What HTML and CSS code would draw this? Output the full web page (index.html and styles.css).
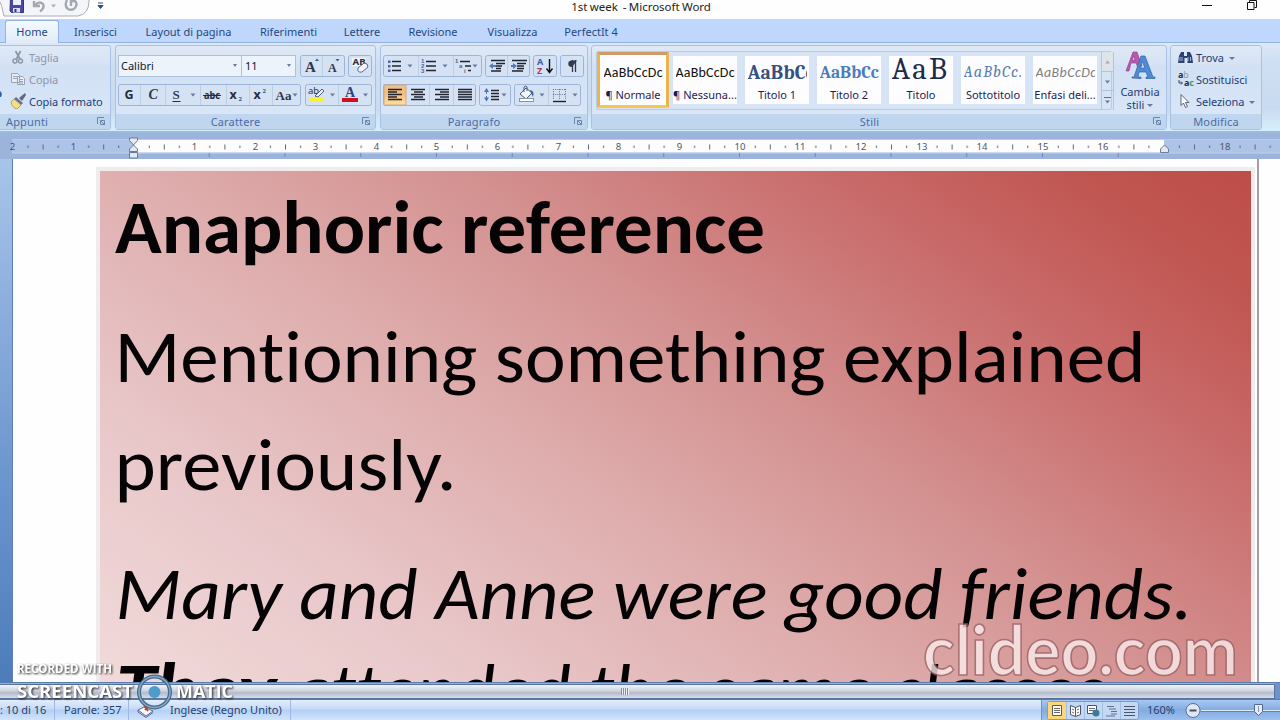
FILE: index.html
```
<!DOCTYPE html>
<html lang="it">
<head>
<meta charset="utf-8">
<title>1st week - Microsoft Word</title>
<link rel="stylesheet" href="styles.css">
</head>
<body>
<div class="window">
  <header class="titlebar">
    <svg class="quick" width="120" height="19" viewBox="0 0 120 19">
      <path d="M-4 -6 Q3 6 4 16 H78 Q89 14 89 1 V-4" fill="#f4f5f8" stroke="#a9acb4"/>
      <path d="M10.500 -2 h13 v14.500 h-12 l-1.500 -1.500z" fill="#4b49a6" stroke="#343380"/>
      <path d="M13 -1 h8 v6 h-8z" fill="#eef0fb"/><path d="M13 8 h7 v4.500 h-7z" fill="#dcdff2"/><path d="M14.500 9 h2 v3 h-2z" fill="#343380"/>
      <path d="M34 1 v5 h6 M35 5.500 q4 -5 8 -1.500 q2 4 -3 7.500" fill="none" stroke="#a3a8b2" stroke-width="2.400"/>
      <path d="M51 4.500 h5 l-2.500 3z" fill="#a9adb5"/>
      <path d="M67 0 q-3 6 1 9 q4 2 7 -1 q3 -4 0 -7 h-4 v5" fill="none" stroke="#a3a8b2" stroke-width="2.400"/>
      <path d="M98 3 h5 M98 5.500 h5 l-2.500 3z" fill="#30507c" stroke="#30507c" stroke-width="1"/>
    </svg>
    <span class="title">1st week&nbsp; - Microsoft Word</span>
    <svg class="winbtns" width="80" height="19" viewBox="0 0 80 19">
      <path d="M2 5.500 h10" stroke="#111" fill="none"/>
      <path d="M47.500 2.500 h6.500 v7 h-6.500z M49.500 2 v-1.500 h7 v7 h-2" stroke="#111" fill="none"/>
    </svg>
  </header>

  <nav class="tabs">
    <span class="tab active" style="width:54px"><b>Home</b></span>
    <span class="tab" style="width:73px">Inserisci</span>
    <span class="tab" style="width:113px">Layout di pagina</span>
    <span class="tab" style="width:87px">Riferimenti</span>
    <span class="tab" style="width:60px">Lettere</span>
    <span class="tab" style="width:82px">Revisione</span>
    <span class="tab" style="width:77px">Visualizza</span>
    <span class="tab" style="width:80px">PerfectIt 4</span>
  </nav>

  <section class="ribbon">
    <div class="group clip">
      <div class="gbody">
        <svg class="edge" width="3" height="12"><path d="M0 4 q3 2 1 6 h-1z" fill="#2d5fa8"/></svg>
        <div class="cmd off"><svg width="17" height="16" viewBox="0 0 17 16"><path d="M5.500 2 l4.500 8 M10.500 2 l-4 8" stroke="#8f96a3" stroke-width="1.700" fill="none"/><circle cx="5" cy="12" r="2" fill="none" stroke="#8f96a3" stroke-width="1.400"/><circle cx="10.500" cy="12" r="2" fill="none" stroke="#8f96a3" stroke-width="1.400"/></svg><span>Taglia</span></div>
        <div class="cmd off"><svg width="17" height="16" viewBox="0 0 17 16"><path d="M1.500 2.500 h6 l2 2 v7 h-8z M7.500 5.500 h5 l2 2 v6 h-7z" fill="#e9edf5" stroke="#9aa3b3"/><path d="M3 5.500 h4 M3 7.500 h4 M9 8.500 h4 M9 10.500 h4 M9 12 h4" stroke="#9aa3b3"/></svg><span>Copia</span></div>
        <div class="cmd"><svg width="17" height="16" viewBox="0 0 17 16"><path d="M15 0 l-6 5 3 3 4 -6z" fill="#5d6a86"/><path d="M6 4 l7 6 -2 2 -7 -6z" fill="#6a6f96"/><path d="M4 6 l7 6 -4 4 q-5 -1 -6 -7z" fill="#f0e08c" stroke="#b0903c" stroke-width=".8"/></svg><span>Copia formato</span></div>
      </div>
      <div class="glabel lab-clip"><span>Appunti</span><svg class="launch" width="9" height="9"><path d="M.5 7 V.5 H7 M3.500 3.500 h4 v4 h-4z M4 4 l4 4" fill="none" stroke="#6d86ac"/></svg></div>
    </div>

    <div class="group font">
      <div class="gbody rows">
        <div class="row">
          <div class="combo name"><span>Calibri</span><i class="arr"></i></div><div class="combo size"><span>11</span><i class="arr"></i></div>
          <svg class="btn" width="45" height="22" viewBox="0 0 45 22" style="margin-left:4px"><rect class="bx" x=".5" y=".5" width="44" height="21" rx="2"/><path class="sp" d="M22.500 1 v20"/><text class="serif" x="5" y="16.500" font-size="15">A</text><path class="blue" d="M15 6 h4 l-2 -2.500z"/><text class="serif" x="28" y="17" font-size="12">A</text><path class="blue" d="M35.500 4 h4 l-2 2.500z"/></svg>
          <svg class="btn" width="24" height="22" viewBox="0 0 24 22" style="margin-left:3px"><rect class="bx" x=".5" y=".5" width="23" height="21" rx="2"/><rect x="4" y="3" width="14" height="8" fill="#f3f6fb"/><text class="ss" x="4.500" y="10" font-size="8" textLength="13" lengthAdjust="spacingAndGlyphs">AB</text><path d="M10 13 l6 -5 q4 0 4 4 l-6 5 q-5 1 -4 -4z" fill="#f3f5fa" stroke="#5e6a80"/></svg>
        </div>
        <div class="row">
          <svg class="btn" width="183" height="22" viewBox="0 0 183 22"><rect class="bx" x=".5" y=".5" width="182" height="21" rx="2"/><path class="sp" d="M22.500 1 v20 M47.500 1 v20 M82.500 1 v20 M108.500 1 v20 M131.500 1 v20 M154.500 1 v20"/><text class="ss" x="6.500" y="15" font-size="12.500">G</text><text class="serif it" x="30.500" y="15" font-size="14">C</text><text class="serif" x="54.500" y="15" font-size="13">S</text><path d="M54.500 17.500 h8" stroke="#252c3c"/><path class="ar" d="M72.500 9.500 h5 l-2.500 3z"/><text class="ss" x="86" y="15" font-size="10" textLength="16" lengthAdjust="spacingAndGlyphs">abc</text><path d="M85 11.500 h18" stroke="#252c3c"/><text class="ss" x="111.500" y="15" font-size="12.500">x</text><text class="ss blue" x="120.500" y="17" font-size="6">2</text><text class="ss" x="135.500" y="15" font-size="12.500">x</text><text class="ss blue" x="144.500" y="9" font-size="6">2</text><text class="serif" x="157.500" y="16" font-size="13">Aa</text><path class="ar" d="M174.500 9.500 h5 l-2.500 3z"/></svg>
          <svg class="btn" width="67" height="22" viewBox="0 0 67 22" style="margin-left:4px"><rect class="bx" x=".5" y=".5" width="66" height="21" rx="2"/><path class="sp" d="M33.500 1 v20"/><text class="sr" x="3" y="10" font-size="9.500">ab</text><path d="M10 12 l7 -7 2 2 -6 6z" fill="#e8edf6" stroke="#56617a"/><rect x="4" y="14" width="15" height="4" fill="#f6f335"/><path class="ar" d="M25 9.500 h5 l-2.500 3z"/><text class="serif navy" x="40" y="13" font-size="14">A</text><rect x="37" y="14" width="16" height="4" fill="#cf1020"/><path class="ar" d="M58 9.500 h5 l-2.500 3z"/></svg>
        </div>
      </div>
      <div class="glabel"><span style="margin-right:20px">Carattere</span><svg class="launch" width="9" height="9"><path d="M.5 7 V.5 H7 M3.500 3.500 h4 v4 h-4z M4 4 l4 4" fill="none" stroke="#6d86ac"/></svg></div>
    </div>

    <div class="group para">
      <div class="gbody rows">
        <div class="row">
          <svg class="btn" width="99" height="22" viewBox="0 0 99 22"><rect class="bx" x=".5" y=".5" width="98" height="21" rx="2"/><path class="sp" d="M35.500 1 v20 M70.500 1 v20"/><path d="M9 6.500 h9 M9 11 h9 M9 15.500 h9 M43 6.500 h10 M43 11 h10 M43 15.500 h10" class="ln"/><path d="M5 5.500 h2.500 v2.500 h-2.500z M5 10 h2.500 v2.500 h-2.500z M5 14.500 h2.500 v2.500 h-2.500z" fill="#5364a4"/><text class="num" x="38" y="8">1</text><text class="num" x="38" y="13">2</text><text class="num" x="38" y="18">3</text><path class="ar" d="M24.500 9.500 h5 l-2.500 3z M59.500 9.500 h5 l-2.500 3z M89.500 9.500 h5 l-2.500 3z"/><text class="num" x="72" y="8">1</text><text class="num" x="76" y="13">a</text><text class="num" x="81" y="18">i</text><path class="ln" d="M77 6.500 h10 M82 11 h6 M85 15.500 h3"/></svg>
          <svg class="btn" width="45" height="22" viewBox="0 0 45 22" style="margin-left:3px"><rect class="bx" x=".5" y=".5" width="44" height="21" rx="2"/><path class="sp" d="M22.500 1 v20"/><path class="ln" d="M6 5.500 h14 M11 8.500 h9 M11 11 h6 M11 13.500 h5 M6 16 h10 M27 5.500 h15 M32 8.500 h9 M32 11 h7 M32 13.500 h7 M27 16 h11"/><path d="M4 11 l4 -3 v2 h3 v2 h-3 v2z M32 11 l-4 -3 v2 h-2 v2 h2 v2z" fill="#5a78b8"/></svg>
          <svg class="btn" width="24" height="22" viewBox="0 0 24 22" style="margin-left:3px"><rect class="bx" x=".5" y=".5" width="23" height="21" rx="2"/><text x="4" y="10" class="ss" style="fill:#3f5aa8" font-size="9">A</text><text x="4" y="18.500" class="ss" style="fill:#a33c50" font-size="9">Z</text><path d="M16.500 4 v13 M13.500 13.500 l3 4 3 -4" fill="none" stroke="#111" stroke-width="1.400"/></svg>
          <svg class="btn" width="24" height="22" viewBox="0 0 24 22" style="margin-left:3px"><rect class="bx" x=".5" y=".5" width="23" height="21" rx="2"/><path d="M17 5.500 h-6 a3.300 3.300 0 0 0 0 6.500 h1z" fill="#333b50"/><path d="M12.500 5 v12 M15.500 5 v12" stroke="#333b50" stroke-width="1.300"/></svg>
        </div>
        <div class="row">
          <svg class="btn" width="93" height="22" viewBox="0 0 93 22"><defs><linearGradient id="or" x1="0" y1="0" x2="0" y2="1"><stop offset="0" stop-color="#ecc09a"/><stop offset=".4" stop-color="#f7bd78"/><stop offset="1" stop-color="#fddfa4"/></linearGradient></defs><rect class="bx" x=".5" y=".5" width="92" height="21" rx="2"/><rect x="1" y="1" width="22" height="20" fill="url(#or)" stroke="#cfa884"/><path class="sp" d="M46.500 1 v20 M70.500 1 v20"/><path class="ln" d="M5 5.500 h14 M5 8 h9 M5 10.500 h14 M5 13 h9 M5 15.500 h14 M28 5.500 h14 M31 8 h9 M28 10.500 h14 M31 13 h9 M28 15.500 h14 M52 5.500 h14 M57 8 h9 M52 10.500 h14 M57 13 h9 M52 15.500 h14 M75 5.500 h14 M75 8 h14 M75 10.500 h14 M75 13 h14 M75 15.500 h14"/></svg>
          <svg class="btn" width="32" height="22" viewBox="0 0 32 22" style="margin-left:3px"><rect class="bx" x=".5" y=".5" width="31" height="21" rx="2"/><path class="ln" d="M12 6.500 h8 M12 9.500 h8 M12 12.500 h8 M12 15.500 h8"/><path d="M5 8 l2.500 -4 2.500 4z M5 13.500 l2.500 4 2.500 -4z" fill="#4f70b5"/><path d="M7.500 7 v3 M7.500 12 v3" stroke="#4f70b5"/><path class="ar" d="M22.500 9.500 h5 l-2.500 3z"/></svg>
          <svg class="btn" width="67" height="22" viewBox="0 0 67 22" style="margin-left:3px"><rect class="bx" x=".5" y=".5" width="66" height="21" rx="2"/><path class="sp" d="M34.500 1 v20"/><path d="M6 10 l6 -6 6 5 -6 6z" fill="#f2f4f9" stroke="#4e5a78"/><path d="M10 8 v-5 q2 -2 3 0 v4" fill="none" stroke="#4e5a78"/><path d="M16 6 q5 1 3 7 l-2 -4z" fill="#3d5fa5"/><rect x="5.500" y="14.500" width="14" height="3" fill="#fff" stroke="#8a95a8"/><path class="ar" d="M25.500 9.500 h5 l-2.500 3z M58.500 9.500 h5 l-2.500 3z"/><path d="M39.500 5 v11 M45.500 5 v11 M51.500 5 v11 M39 5.500 h13 M39 10.500 h13" stroke="#66708a" stroke-dasharray="1 1.200" fill="none"/><path d="M39 17.500 h13" stroke="#222" stroke-width="1.400"/></svg>
        </div>
      </div>
      <div class="glabel"><span style="margin-right:20px">Paragrafo</span><svg class="launch" width="9" height="9"><path d="M.5 7 V.5 H7 M3.500 3.500 h4 v4 h-4z M4 4 l4 4" fill="none" stroke="#6d86ac"/></svg></div>
    </div>

    <div class="group styles">
      <div class="gbody stylebody">
        <div class="gallery">
          <div class="style sel"><span class="smp">AaBbCcDc</span><span class="nm">¶ Normale</span></div>
          <div class="style"><span class="smp">AaBbCcDc</span><span class="nm">¶ Nessuna...</span></div>
          <div class="style"><span class="smp h1">AaBbCc</span><span class="nm">Titolo 1</span></div>
          <div class="style"><span class="smp h2">AaBbCc</span><span class="nm">Titolo 2</span></div>
          <div class="style"><span class="smp tt">AaB</span><span class="nm">Titolo</span></div>
          <div class="style"><span class="smp sub">AaBbCc.</span><span class="nm">Sottotitolo</span></div>
          <div class="style"><span class="smp em">AaBbCcDc</span><span class="nm">Enfasi deli...</span></div>
          <svg class="gs" width="13" height="58" viewBox="0 0 13 58"><path d="M0 0 h13 v19 h-13z" fill="#dfe3ea"/><path d="M.5 0 V58 M0 19.500 h13 M0 38.500 h13 M12.500 0 v58" stroke="#b0c5e2" fill="none"/><path d="M4 11.500 h5 l-2.500 -3z" fill="#a8acb4"/><path class="ar" d="M4 28.500 h5 l-2.500 3z M4 48.500 h5 l-2.500 3z"/><path d="M3 45.500 h7" stroke="#5b6f95"/></svg>
        </div>
        <div class="change">
          <svg width="32" height="30" viewBox="0 0 32 30"><path d="M2 20 L9 1 h4 l5 14 -4 2 -2 -5 h-5 l-2 8z M8 9 h3 l-1 -4z" fill="#b957ad" stroke="#873c8c" stroke-width=".6" fill-rule="evenodd"/><path d="M8 27 v-1 h2 L17 5 h4 l8 21 h2 v1.500 h-9 v-1.500 h2 l-2 -5 h-7 l-1 5 h3 v1.500z M16 17 h5 l-3 -7z" fill="#4f8ad4" stroke="#2d63a9" stroke-width=".7" fill-rule="evenodd"/></svg>
          <span>Cambia</span><span>stili<i class="arr"></i></span>
        </div>
      </div>
      <div class="glabel"><span style="margin-right:19px">Stili</span><svg class="launch" width="9" height="9"><path d="M.5 7 V.5 H7 M3.500 3.500 h4 v4 h-4z M4 4 l4 4" fill="none" stroke="#6d86ac"/></svg></div>
    </div>

    <div class="group edit">
      <div class="gbody">
        <div class="cmd"><svg width="17" height="16" viewBox="0 0 17 16"><path d="M1 14 l1 -7 2 -4 h3 v4 h3 v-4 h3 l2 4 1 7 h-5.500 v-5 h-3 v5z" fill="#2b4272"/><path d="M3 12 v-4 M5 12 v-4 M11 12 v-4 M13.500 12 v-4" stroke="#c9d6ee" stroke-width=".8"/></svg><span>Trova<i class="arr"></i></span></div>
        <div class="cmd"><svg width="17" height="16" viewBox="0 0 17 16"><text x="1" y="7" font-size="9"><tspan class="ss">a</tspan><tspan class="sr" style="fill:#8f98a8">b</tspan></text><text x="7" y="15" font-size="9"><tspan class="ss">a</tspan><tspan class="ss" style="fill:#3f9e4d">c</tspan></text><path d="M2 9 v3 h3 M4 10.500 l1.500 1.500 -1.500 1.500" stroke="#34486e" fill="none"/></svg><span>Sostituisci</span></div>
        <div class="cmd"><svg width="17" height="16" viewBox="0 0 17 16"><path d="M4 1.500 v11 l2.500 -2.500 2 4.500 2 -1 -2 -4 h3.500z" fill="#fff" stroke="#5b6478"/></svg><span>Seleziona<i class="arr"></i></span></div>
      </div>
      <div class="glabel"><span>Modifica</span></div>
    </div>
  </section>

  <svg class="ruler" width="1280" height="26" viewBox="0 133 1280 26">
    <defs>
      <pattern id="tk" x="134" y="140" width="60.600" height="13" patternUnits="userSpaceOnUse"><path d="M15.200 5.500 v2.500 M30.300 4.500 v5 M45.400 5.500 v2.500" stroke="#5d6678" fill="none"/></pattern>
      <pattern id="tb" x="134" y="153" width="75.750" height="4" patternUnits="userSpaceOnUse"><path d="M75.200 0 v4" stroke="#7088b8"/></pattern>
    </defs>
    <rect x="0" y="133" width="1280" height="26" fill="#9cb4dc"/>
    <path d="M12 139.500 H1280" stroke="#b9cdeb"/>
    <rect x="12" y="140" width="1268" height="12.500" fill="#adc3e8"/>
    <rect x="134" y="140" width="1030" height="12.500" fill="#fdfdfe"/>
    <path d="M12 153 H1280" stroke="#c4d4ef"/>
    <rect x="16" y="140" width="1264" height="13" fill="url(#tk)"/>
    <rect x="134" y="153" width="1010" height="4" fill="url(#tb)"/>
    <g class="rn"><text x="12.500" y="150">2</text><text x="73.500" y="150">1</text><text x="194.500" y="150">1</text><text x="255.500" y="150">2</text><text x="315.500" y="150">3</text><text x="376.500" y="150">4</text><text x="436.500" y="150">5</text><text x="497.500" y="150">6</text><text x="558.500" y="150">7</text><text x="618.500" y="150">8</text><text x="679.500" y="150">9</text><text x="740" y="150">10</text><text x="800" y="150">11</text><text x="861" y="150">12</text><text x="922" y="150">13</text><text x="982" y="150">14</text><text x="1043" y="150">15</text><text x="1103" y="150">16</text><text x="1225" y="150">18</text></g>
    <path d="M129.500 138 h8 v2.500 l-4 4.500 -4 -4.500z M129.500 151.500 v-2.500 l4 -4 4 4 v2.500z M129.500 152.500 h8 v5.500 h-8z M1160.500 152.500 v-3.500 l4 -4 4 4 v3.500z" fill="#e4e9f1" stroke="#6a7a98"/>
  </svg>

  <main class="doc">
    <div class="side"></div>
    <div class="paper">
      <div class="red">
        <svg width="1151" height="511" viewBox="100 171 1151 511">
          <text x="115" y="253" class="dt" font-weight="700" textLength="650" lengthAdjust="spacingAndGlyphs">Anaphoric reference</text>
          <text x="114.500" y="382" class="dt" textLength="1031" lengthAdjust="spacingAndGlyphs">Mentioning something explained</text>
          <text x="114.500" y="490" class="dt" textLength="342" lengthAdjust="spacingAndGlyphs">previously.</text>
          <text x="115.500" y="619" class="dt" font-style="italic" textLength="1077" lengthAdjust="spacingAndGlyphs">Mary and Anne were good friends.</text>
          <text x="116" y="715" class="dt" font-style="italic" font-weight="700" textLength="160" lengthAdjust="spacingAndGlyphs">They</text>
          <text x="291" y="715" class="dt" font-style="italic" textLength="814" lengthAdjust="spacingAndGlyphs">attended the same classes</text>
        </svg>
      </div>
    </div>
  </main>

  <div class="hscroll"><div class="thumb"><i></i></div><div class="end"></div></div>

  <footer class="status">
    <span class="cell c1">: 10 di 16</span>
    <span class="cell c2">Parole: 357</span>
    <span class="cell c3"><svg width="18" height="16" viewBox="0 0 18 16"><path d="M1 8 l6 -3 9 4 -7 5z" fill="#f6f7fb" stroke="#5c6c90"/><path d="M1 8 v2 l8 5.500 7 -5" fill="none" stroke="#5c6c90"/><path d="M7 3 l4 6 M12 3 l-4 5" stroke="#d0392b" stroke-width="1.800"/></svg><span>Inglese (Regno Unito)</span></span>
    <span class="fill"></span>
    <div class="tools">
      <svg width="92" height="19" viewBox="0 0 92 19"><rect x=".5" y=".5" width="91" height="18" rx="2" fill="#c2d8f4" stroke="#7d9cc9"/><rect x="1" y="1" width="18" height="17" fill="#fbd77c"/><path d="M19.500 1 v17 M37.500 1 v17 M55.500 1 v17 M73.500 1 v17" stroke="#a5bfe2"/><path d="M5.500 4.500 h9 v10 h-9z" fill="#fffef4" stroke="#555c66"/><path d="M7 7.500 h6 M7 9.500 h6 M7 11.500 h6" stroke="#666"/><path d="M23.500 4.500 l5 2 5 -2 v9 l-5 2 -5 -2z M28.500 6 v9" fill="#fff" stroke="#4b5668"/><path d="M25 8 l2 1 M25 11 l2 1 M30 9 l2 -1 M30 12 l2 -1" stroke="#667"/><path d="M40.500 4.500 h9 v8 h-9z" fill="#fff" stroke="#4b5668"/><path d="M42 7.500 h6 M42 9.500 h5" stroke="#667"/><circle cx="49" cy="12" r="3.500" fill="#3d7d94"/><path d="M60 5.500 h7 M62 8 h7 M64 10.500 h6 M64 13 h6 M59 15 h9" stroke="#647088" /><path d="M77 5.500 h11 M77 8.500 h11 M77 11.500 h11 M77 14.500 h11" stroke="#4a5568"/></svg>
      <span class="pct">160%</span>
      <svg width="97" height="19" viewBox="0 0 97 19"><path d="M18 9.500 H97" stroke="#dfeafc"/><path d="M18 10.500 H97" stroke="#5f82b8"/><circle cx="10" cy="9.500" r="7" fill="#dfe7f3" stroke="#5a6f95"/><path d="M6.500 9.500 h7" stroke="#41506e" stroke-width="2"/><path d="M71.500 3.500 h8 v7 l-4 4 -4 -4z" fill="#e6edf7" stroke="#55698f"/><path d="M75.500 5 v6" stroke="#8698b8"/></svg>
    </div>
  </footer>

  <svg class="mark clideo" width="330" height="70" viewBox="915 620 330 70"><text x="923" y="675" textLength="315" lengthAdjust="spacingAndGlyphs">clideo.com</text></svg>
  <svg class="mark som" width="250" height="60" viewBox="0 655 250 60">
    <g class="sh"><text x="17" y="672.500" font-size="11.500" textLength="95" lengthAdjust="spacingAndGlyphs">RECORDED WITH</text>
    <text x="17" y="697.500" font-size="17" textLength="116" lengthAdjust="spacingAndGlyphs">SCREENCAST</text>
    <text x="176" y="697.500" font-size="17" textLength="57" lengthAdjust="spacingAndGlyphs">MATIC</text></g>
    <circle cx="154.500" cy="692" r="15.500" fill="none" stroke="#476a88" stroke-width="4"/><circle cx="154.500" cy="692" r="15.500" fill="none" stroke="#7fa9ca" stroke-width="1.600"/><circle cx="154.500" cy="692" r="6" fill="#4f9ccb"/>
  </svg>
</div>
</body>
</html>
```
FILE: styles.css
```
* { box-sizing: border-box; }
body { margin: 0; background: #fff; font-family: "Noto Sans", "Open Sans", sans-serif; font-size: 11px; color: #1e3c78; }
.window { position: relative; width: 1280px; height: 720px; overflow: hidden; display: flex; flex-direction: column; }
.titlebar { height: 19px; display: flex; background: #fefefe; flex: none; }
.quick { flex: none; }
.title { flex: 1; text-align: center; color: #222; font-size: 11.5px; line-height: 14px; letter-spacing: -.03px; word-spacing: -.5px; padding-left: 63px; padding-right: 101px; }
.winbtns { flex: none; width: 80px; }
.tabs { height: 24px; flex: none; display: flex; background: #bfd7fd; padding-left: 5px; border-bottom: 1px solid #93b2e1; }
.tab { height: 24px; line-height: 26px; text-align: center; color: #254880; }
.tab b { font-weight: 400; }
.tab.active { background: linear-gradient(#f4f9ff, #e0ebf9); border: 1px solid #92b3e3; border-bottom: 0; border-radius: 3px 3px 0 0; margin-top: 1px; line-height: 22px; }
.ribbon { height: 90px; flex: none; display: flex; padding: 2px 0 0; background: linear-gradient(#dce8f7 0, #cfdff3 20%, #c9dbf1 75%, #d5eefb 97%); border-bottom: 2px solid #9dbade; }
.group { height: 85px; border: 1px solid #a9c2e3; border-radius: 3px; display: flex; flex-direction: column; flex: none; margin-right: 4px; background: linear-gradient(#dfe9f7 0, #d6e3f4 22%, #d1e0f3 24%, #dae8f9 100%); }
.gbody { flex: 1; }
.glabel { height: 15px; background: #c0d6ef; color: #4a6ba8; display: flex; align-items: center; justify-content: center; position: relative; letter-spacing: .15px; }
.launch { position: absolute; right: 4px; top: 3px; }
.clip { width: 111px; border-left: 0; border-radius: 0 3px 3px 0; }
.edge { position: absolute; left: 0; top: 87px; }
.lab-clip { justify-content: flex-start; padding-left: 6px; }
.cmd { height: 22px; display: flex; align-items: center; color: #1e3c78; padding-left: 10px; gap: 2px; letter-spacing: -.05px; white-space: nowrap; }
.cmd svg { flex: none; }
.cmd.off { color: #8d97a8; }
.arr { display: inline-block; border: 3px solid transparent; border-top-color: #657ba3; border-bottom: 0; margin-left: 5px; vertical-align: 2px; }
.font { width: 261px; }
.rows { padding: 9px 3px 0; }
.font .rows { padding-left: 2px; }
.row { height: 29px; display: flex; }
.btn { display: block; flex: none; }
.combo { height: 22px; border: 1px solid #abc1de; background: #edf3fb; display: flex; align-items: center; justify-content: space-between; padding: 0 4px 2px 2px; color: #101828; }
.combo.name { width: 124px; }
.combo.size { width: 54px; border-left: 0; padding-left: 3px; }
.combo .arr { margin: 0; border-width: 3px 2.5px 0; }
.bx { fill: #d5e2f4; stroke: #9cb4d6; }
.sp { stroke: #bccde6; fill: none; }
.ln { stroke: #20242e; stroke-width: 1.4; fill: none; }
.ar { fill: #657ba3; }
.blue { fill: #3d5c9c !important; }
.serif { font-family: "Liberation Serif", serif; font-weight: 700; fill: #30384c; }
.it { font-style: italic; }
.ss { font-family: "Noto Sans", sans-serif; font-weight: 700; fill: #252c3c; }
.sr { font-family: "Noto Sans", sans-serif; fill: #252c3c; }
.navy { fill: #2b4684; }
.num { font: 700 6px "Liberation Sans", sans-serif; fill: #4c60a0; }
.para { width: 208px; margin-right: 3px; }
.para .rows { padding-left: 2px; }
.styles { width: 576px; margin-right: 3px; }
.stylebody { display: flex; padding: 5px 0 0 4px; }
.gallery { width: 516px; height: 59px; display: flex; border: 1px solid #b7cce8; border-radius: 2px; background: #d6e4f6; flex: none; }
.style { width: 64px; height: 48px; margin: 4px 4px; background: #fdfdff; display: flex; flex-direction: column; align-items: center; overflow: hidden; flex: none; }
.style.sel { width: 72px; height: 56px; margin: 0; border: 3px solid #edb44a; border-top-color: #d29a66; border-bottom-color: #f3c752; padding: 1px; border-radius: 2px; }
.smp { height: 31px; width: 59px; overflow: hidden; white-space: nowrap; font: 14px/33px Carlito, Lato, sans-serif; color: #111; letter-spacing: .2px; flex: none; }
.nm { line-height: 16px; color: #1d1c50; white-space: nowrap; }
.smp.h1 { font: 700 19.5px/33px Caladea, "Liberation Serif", serif; color: #365080; }
.smp.h2 { font: 700 17.5px/33px Caladea, "Liberation Serif", serif; color: #4d7db8; letter-spacing: 0; }
.smp.tt { font: 31px/26px Caladea, "Liberation Serif", serif; color: #1d2b48; letter-spacing: 2.2px; }
.smp.sub { font: italic 16px/33px Caladea, "Liberation Serif", serif; color: #5680b4; letter-spacing: 1.2px; }
.smp.em { font-style: italic; color: #808080; letter-spacing: .4px; }
.gs { margin-left: auto; flex: none; }
.change { width: 58px; display: flex; flex-direction: column; align-items: center; line-height: 13px; padding-left: 2px; }
.change svg { margin-bottom: 4px; flex: none; }
.change .arr { margin-left: 3px; }
.edit { width: 92px; }
.edit .cmd { padding-left: 6px; gap: 2px; }
.ruler { flex: none; display: block; }
.rn { font: 9.5px "Noto Sans", sans-serif; fill: #4b5568; text-anchor: middle; }
.doc { height: 523px; flex: none; display: flex; background: #fefefe; }
.side { width: 13px; background: linear-gradient(#a9c4ea, #6d96cf 60%, #4d7cb9); border-right: 1px solid #5b7fb4; }
.paper { width: 1246px; border-right: 2px solid #a59da2; padding: 12px 6px 0 87px; }
.red { width: 1151px; height: 511px; background: linear-gradient(35deg, #f1dad9 0%, #e9c8ca 20%, #dfaeae 40%, #d39190 58%, #c96b6b 77%, #c05550 91%, #be4d49 100%); box-shadow: 0 0 0 4px #f0ecee; }
.red svg { display: block; }
.dt { font-family: Carlito, Lato, sans-serif; font-size: 74px; fill: #050303; font-variant-ligatures: none; }
.hscroll { height: 17px; flex: none; display: flex; background: #8fb0dd; border-top: 1px solid #5a7cb0; }
.thumb { width: 1275px; height: 15px; margin-top: 1px; background: linear-gradient(#f2f4f8, #ced3de 45%, #b3bccd 60%, #d8dde7); border: 1px solid #56749f; display: flex; justify-content: center; align-items: center; border-left: 0; }
.thumb i { width: 8px; height: 7px; margin-right: 25px; background: repeating-linear-gradient(90deg, #8590a8 0 1px, #e8ebf2 1px 2px); }
.end { width: 5px; background: #6f93c8; }
.status { height: 21px; flex: none; display: flex; background: linear-gradient(#e3edfb, #c5daf7 45%, #b3cff5 50%, #d2e4fa); border-top: 1px solid #5a7cb0; color: #27406f; line-height: 20px; }
.cell { border-right: 1px solid #9fb9df; white-space: nowrap; display: flex; align-items: center; }
.c1 { width: 55px; }
.c2 { width: 74px; padding-left: 9px; }
.c3 { width: 162px; padding-left: 8px; gap: 15px; }
.fill { flex: 1; }
.tools { width: 239px; background: linear-gradient(#a9c8f2, #83abe0 50%, #9dc0ee); border-left: 1px solid #7191c0; display: flex; align-items: center; padding-left: 5px; }
.tools svg { flex: none; }
.pct { width: 44px; text-align: center; }
.mark { position: absolute; }
.clideo { left: 915px; top: 620px; opacity: .78; }
.clideo text { font: 700 68px Lato, sans-serif; fill: #fbefef; stroke: #9c6468; stroke-width: 1.6px; }
.som { left: 0; top: 655px; }
.sh { filter: drop-shadow(1px 1px 1px #222); font-family: "Open Sans", "Noto Sans", sans-serif; font-weight: 700; fill: #fff; }
```
